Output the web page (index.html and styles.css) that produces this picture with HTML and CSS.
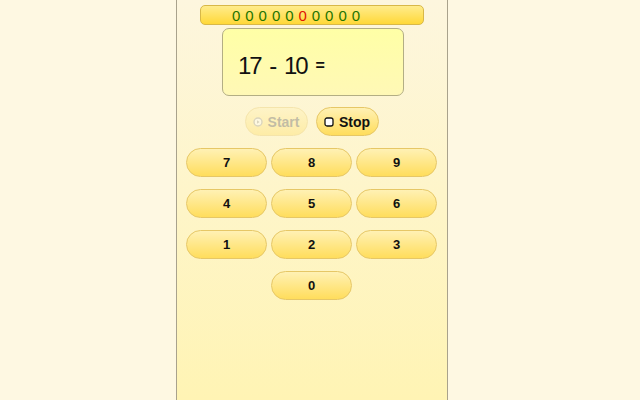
FILE: index.html
```html
<!DOCTYPE html>
<html lang="en">
<head>
<meta charset="UTF-8">
<title>Math Drill</title>
<link rel="stylesheet" href="styles.css">
</head>
<body>
    <div class="panel">
        <div class="score">
            <span>0</span><span>0</span><span>0</span><span>0</span><span>0</span><span class="wrong">0</span><span>0</span><span>0</span><span>0</span><span>0</span>
        </div>
        <div class="display">17 - 10 <span class="eq">=</span></div>
        <div class="controls">
            <button class="btn ctl disabled">
                <svg width="10" height="10" viewBox="0 0 10 10"><circle cx="5" cy="5" r="4" fill="#fff" stroke="#999" stroke-width="1.4"/><path d="M4 3.2 L6.6 5 L4 6.8 Z" fill="#999"/></svg>
                Start
            </button>
            <button class="btn ctl">
                <svg width="10" height="10" viewBox="0 0 10 10"><rect x="1" y="1" width="8" height="8" rx="2" fill="#fff" stroke="#111" stroke-width="1.3"/></svg>
                Stop
            </button>
        </div>
        <div class="keypad">
            <button class="btn key">7</button>
            <button class="btn key">8</button>
            <button class="btn key">9</button>
            <button class="btn key">4</button>
            <button class="btn key">5</button>
            <button class="btn key">6</button>
            <button class="btn key">1</button>
            <button class="btn key">2</button>
            <button class="btn key">3</button>
            <button class="btn key zero">0</button>
        </div>
    </div>
</body>
</html>
```
FILE: styles.css
```css
html, body {
    height: 100%;
}
body {
    margin: 0;
    background-color: #fef8e2;
    font-family: 'Liberation Sans', Arial, sans-serif;
}
.panel {
    box-sizing: border-box;
    width: 272px;
    height: 400px;
    margin-left: 176px;
    border-left: 1px solid #a9a28c;
    border-right: 1px solid #a9a28c;
    background: linear-gradient(to bottom, #fdf6de, #fff4b4);
    padding-top: 5px;
}
.score {
    box-sizing: border-box;
    width: 224px;
    height: 20px;
    margin-left: 23px;
    border: 1px solid #d8b848;
    border-radius: 5px;
    background: linear-gradient(to bottom, #ffec8c, #ffd838);
    padding-left: 31px;
    display: flex;
    align-items: center;
    font-size: 15px;
    color: #1e7400;
    line-height: 1;
}
.score span {
    width: 13.3px;
    text-align: left;
}
.score .wrong {
    color: #e01400;
}
.display {
    box-sizing: border-box;
    width: 182px;
    height: 68px;
    margin: 3px 0 0 45px;
    border: 1px solid #b3ae84;
    border-radius: 7px;
    background: linear-gradient(to bottom, #ffffa6, #fff8b6);
    padding: 23px 0 0 15px;
    font-family: 'Liberation Sans', Arial, sans-serif;
    font-size: 24px;
    letter-spacing: -2px;
    word-spacing: 4px;
    color: #111;
}
.display .eq {
    font-size: 16px;
    font-weight: bold;
    letter-spacing: 0;
    vertical-align: 3px;
}
.controls {
    display: flex;
    justify-content: center;
    gap: 8px;
    margin: 11px 0 0 -1px;
}
.btn {
    box-sizing: border-box;
    height: 29px;
    border: 1px solid #e6c766;
    border-radius: 15px;
    background: linear-gradient(to bottom, #fff1b4, #ffdd5c);
    font-family: 'Liberation Sans', Arial, sans-serif;
    font-weight: bold;
    font-size: 13px;
    color: #111;
    padding: 0;
}
.ctl {
    width: 63px;
    font-size: 14px;
    display: flex;
    align-items: center;
    justify-content: center;
    gap: 5px;
}
.ctl.disabled {
    opacity: 0.35;
    color: #555;
}
.keypad {
    display: grid;
    grid-template-columns: repeat(3, 81px);
    column-gap: 4px;
    row-gap: 12px;
    margin: 12px 0 0 9px;
}
.zero {
    grid-column: 2;
}
```
